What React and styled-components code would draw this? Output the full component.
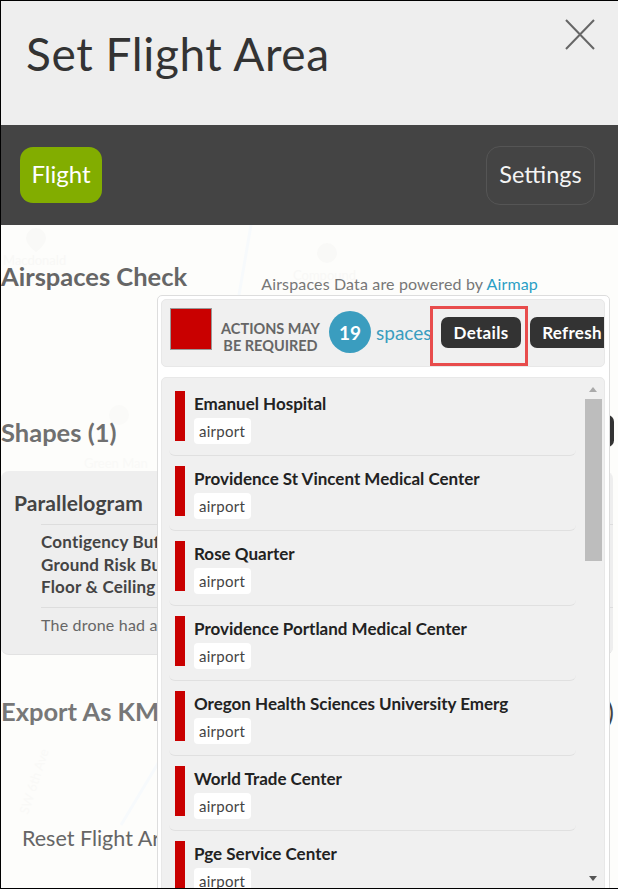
import React from 'react'
import styled, { createGlobalStyle } from 'styled-components'

const GlobalStyle = createGlobalStyle`
  html, body { margin: 0; padding: 0; background: #fff; }
  * { box-sizing: border-box; }
`

const airspaces = [
  'Emanuel Hospital',
  'Providence St Vincent Medical Center',
  'Rose Quarter',
  'Providence Portland Medical Center',
  'Oregon Health Sciences University Emerg',
  'World Trade Center',
  'Pge Service Center',
]

const App = () => {
  return (
    <Frame>
      <GlobalStyle />
      <Header>
        <Title>Set Flight Area</Title>
        <CloseIcon viewBox="0 0 30 31" aria-hidden="true">
          <path d="M1 1 L29 30 M29 1 L1 30" />
        </CloseIcon>
      </Header>
      <TabBar>
        <FlightTab>Flight</FlightTab>
        <SettingsTab>Settings</SettingsTab>
      </TabBar>
      <Body>
        <MapLayer viewBox="0 0 618 664" aria-hidden="true">
          <path d="M250 0 L238 70 M120 600 L300 300" fill="none" stroke="#f7fafc" strokeWidth="3" />
          <path d="M35 3 a10 10 0 0 1 10 10 c0 7 -10 14 -10 14 s-10 -7 -10 -14 a10 10 0 0 1 10 -10z" fill="#f9f9f7" />
          <circle cx="326" cy="28" r="10" fill="#f9f9f7" />
          <circle cx="118" cy="190" r="10" fill="#fafaf8" />
          <text x="2" y="40" fill="#f8f8f6" fontSize="13" fontFamily="Lato, sans-serif">Macdonald</text>
          <text x="292" y="55" fill="#f8f8f6" fontSize="13" fontFamily="Lato, sans-serif">Compound</text>
          <text x="83" y="243" fill="#f9f9f7" fontSize="13" fontFamily="Lato, sans-serif">Green Man</text>
          <text transform="translate(27 590) rotate(-72)" fill="#f9f9f7" fontSize="13" fontFamily="Lato, sans-serif">SW 6th Ave</text>
        </MapLayer>
        <SectionRow>
          <SectionTitle>Airspaces Check</SectionTitle>
          <PoweredBy>Airspaces Data are powered by <a>Airmap</a></PoweredBy>
        </SectionRow>
        <ShapesTitle>Shapes (1)</ShapesTitle>
        <ShapeCard>
          <ShapeName>Parallelogram</ShapeName>
          <ShapeDetails>
            <ShapeItem>Contigency Buffer</ShapeItem>
            <ShapeItem>Ground Risk Buffer</ShapeItem>
            <ShapeItem>Floor &amp; Ceiling</ShapeItem>
            <ShapeNote>The drone had a flight path</ShapeNote>
          </ShapeDetails>
        </ShapeCard>
        <ExportTitle>Export As KML</ExportTitle>
        <ResetLink>Reset Flight Area</ResetLink>

        <BehindButton />
        <BehindParen>)</BehindParen>

        <Popover>
          <StatusCard>
            <RedSquare />
            <StatusText>ACTIONS MAY<br />BE REQUIRED</StatusText>
            <CountBadge>19</CountBadge>
            <SpacesLabel>spaces</SpacesLabel>
            <ActionButton>Details</ActionButton>
            <ActionButton $wide>Refresh</ActionButton>
          </StatusCard>
          <ListCard>
            <List>
              {airspaces.map((name) => (
                <Row key={name}>
                  <RowBar />
                  <RowBody>
                    <RowTitle>{name}</RowTitle>
                    <Tag>airport</Tag>
                  </RowBody>
                </Row>
              ))}
            </List>
            <ScrollTrack>
              <ScrollArrow />
              <ScrollThumb />
              <ScrollArrow $down />
            </ScrollTrack>
          </ListCard>
          <Callout />
        </Popover>
      </Body>
    </Frame>
  )
}

const Frame = styled.div`
  position: relative;
  width: 618px;
  height: 889px;
  overflow: hidden;
  border: solid #000;
  border-width: 1px 0 1px 1px;
  background: #fdfdfb;
  font-family: Lato, "Open Sans", sans-serif;
`

const Header = styled.header`
  display: flex;
  justify-content: space-between;
  align-items: flex-start;
  height: 124px;
  padding: 28px 23px 0 25px;
  background: #eee;
`

const Title = styled.h1`
  margin: 0;
  font-size: 46px;
  line-height: 50px;
  font-weight: 400;
  letter-spacing: 0.6px;
  color: #333;
`

const CloseIcon = styled.svg`
  width: 30px;
  height: 31px;
  margin-top: -10px;
  fill: none;
  stroke: #666;
  stroke-width: 2;
`

const TabBar = styled.nav`
  display: flex;
  justify-content: space-between;
  align-items: center;
  height: 100px;
  padding: 0 23px 0 19px;
  background: #444;
`

const FlightTab = styled.div`
  display: flex;
  align-items: center;
  justify-content: center;
  width: 82px;
  height: 56px;
  padding-bottom: 3px;
  border-radius: 13px;
  background: #82ad00;
  color: #fff;
  font-size: 24px;
`

const SettingsTab = styled.div`
  display: flex;
  align-items: center;
  justify-content: center;
  width: 109px;
  height: 59px;
  padding-bottom: 3px;
  border: 1px solid #555;
  border-radius: 14px;
  color: #f4f4f4;
  font-size: 23.5px;
`

const Body = styled.main`
  position: relative;
  height: 663px;
  padding-top: 37px;
`

const MapLayer = styled.svg`
  position: absolute;
  top: 0;
  left: 0;
  width: 618px;
  height: 664px;
`

const SectionRow = styled.div`
  position: relative;
  display: flex;
  justify-content: space-between;
  padding-right: 80px;
`

const SectionTitle = styled.h2`
  margin: 0;
  font-size: 25.5px;
  line-height: 28px;
  font-weight: 700;
  color: #666;
`

const PoweredBy = styled.div`
  padding-top: 13px;
  font-size: 16px;
  line-height: 18px;
  letter-spacing: 0.15px;
  color: #777;

  a { color: #2a9fc5; }
`

const ShapesTitle = styled(SectionTitle)`
  position: relative;
  margin-top: 125px;
  color: #707070;
`

const ShapeCard = styled.section`
  position: relative;
  width: 612px;
  height: 184px;
  margin-top: 25px;
  padding: 19px 0 0 13px;
  border-bottom: 1px solid #e2e2e2;
  border-radius: 8px;
  background: #eee;
`

const ShapeName = styled.div`
  font-size: 21px;
  line-height: 26px;
  font-weight: 700;
  letter-spacing: 0.1px;
  color: #444;
`

const ShapeDetails = styled.div`
  margin: 8px 0 0 27px;
  padding-top: 6px;
  border-top: 1px solid #ddd;
`

const ShapeItem = styled.div`
  font-size: 17px;
  line-height: 22.5px;
  font-weight: 700;
  letter-spacing: 0.2px;
  color: #444;
`

const ShapeNote = styled.div`
  margin-top: 8px;
  padding-top: 7px;
  border-top: 1px solid #ddd;
  font-size: 16px;
  line-height: 20px;
  letter-spacing: 0.2px;
  color: #666;
`

const ExportTitle = styled(SectionTitle)`
  position: relative;
  margin-top: 42px;
  color: #777;
`

const ResetLink = styled.div`
  position: relative;
  margin: 100px 0 0 21px;
  font-size: 21.5px;
  line-height: 26px;
  color: #666;
`

const BehindButton = styled.div`
  position: absolute;
  top: 190px;
  left: 600px;
  width: 13px;
  height: 32px;
  border-radius: 7px;
  background: #333;
`

const BehindParen = styled.div`
  position: absolute;
  top: 473px;
  left: 606px;
  font-size: 26px;
  line-height: 28px;
  color: #444;
`

const Popover = styled.aside`
  position: absolute;
  top: 70px;
  left: 156px;
  width: 453px;
  height: 620px;
  padding: 3px 4px 3px 3px;
  border: 1px solid #ddd;
  border-radius: 5px;
  background: #fff;
`

const StatusCard = styled.div`
  display: flex;
  align-items: flex-start;
  height: 68px;
  padding-left: 8px;
  overflow: hidden;
  border: 1px solid #e8e8e8;
  border-radius: 5px;
  background: #f0f0f0;
`

const RedSquare = styled.div`
  flex: none;
  width: 42px;
  height: 42px;
  margin-top: 8px;
  border: 1px solid #999;
  background: #c90000;
`

const StatusText = styled.div`
  flex: none;
  width: 117px;
  margin-top: 20px;
  font-size: 14.5px;
  line-height: 17px;
  font-weight: 700;
  text-align: center;
  color: #666;
`

const CountBadge = styled.div`
  flex: none;
  display: flex;
  align-items: center;
  justify-content: center;
  width: 42px;
  height: 42px;
  margin-top: 11px;
  border-radius: 50%;
  background: #3a9dbf;
  color: #fff;
  font-size: 19px;
  font-weight: 700;
`

const SpacesLabel = styled.div`
  flex: none;
  width: 70px;
  padding-left: 5px;
  margin-top: 21px;
  font-size: 19px;
  line-height: 24px;
  color: #3a9dbf;
`

const ActionButton = styled.div`
  flex: none;
  display: flex;
  align-items: center;
  justify-content: center;
  width: ${(p) => (p.$wide ? '84px' : '80px')};
  height: 31px;
  margin: 17px 9px 0 0;
  border-radius: 7px;
  background: #333;
  color: #fff;
  font-size: 17px;
  font-weight: 700;
  letter-spacing: 0.3px;
`

const ListCard = styled.div`
  position: relative;
  height: 540px;
  margin-top: 10px;
  padding: 13px 0 0 7px;
  overflow: hidden;
  border: 1px solid #e8e8e8;
  border-radius: 5px;
  background: #f0f0f0;
`

const List = styled.div`
  width: 407px;
`

const Row = styled.div`
  display: flex;
  height: 65px;
  margin-bottom: 10px;
  padding-left: 6px;
  border-bottom: 1px solid #e0e0e0;
  border-radius: 0 0 6px 6px;
`

const RowBar = styled.div`
  flex: none;
  width: 10px;
  height: 50px;
  background: #c90000;
`

const RowBody = styled.div`
  padding: 1px 0 0 9px;
`

const RowTitle = styled.div`
  font-size: 17px;
  line-height: 24px;
  font-weight: 700;
  color: #222;
`

const Tag = styled.div`
  display: inline-block;
  width: 57px;
  height: 26px;
  margin-top: 2px;
  padding-left: 5px;
  border-radius: 4px;
  background: #fff;
  font-size: 15px;
  line-height: 26px;
  letter-spacing: 0.25px;
  color: #444;
`

const ScrollTrack = styled.div`
  position: absolute;
  top: 0;
  bottom: 0;
  right: 2px;
  width: 17px;
  padding-top: 21px;
`

const ScrollThumb = styled.div`
  height: 162px;
  background: #bdbdbd;
`

const ScrollArrow = styled.div`
  position: absolute;
  left: 4px;
  width: 0;
  height: 0;
  border-left: 4px solid transparent;
  border-right: 4px solid transparent;
  ${(p) => (p.$down
    ? 'top: 498px; border-top: 5px solid #555;'
    : 'top: 9px; border-bottom: 5px solid #aaa;')}
`

const Callout = styled.div`
  position: absolute;
  top: 10px;
  left: 272px;
  width: 98px;
  height: 60px;
  border: 3px solid #e84c4c;
`

export default App
